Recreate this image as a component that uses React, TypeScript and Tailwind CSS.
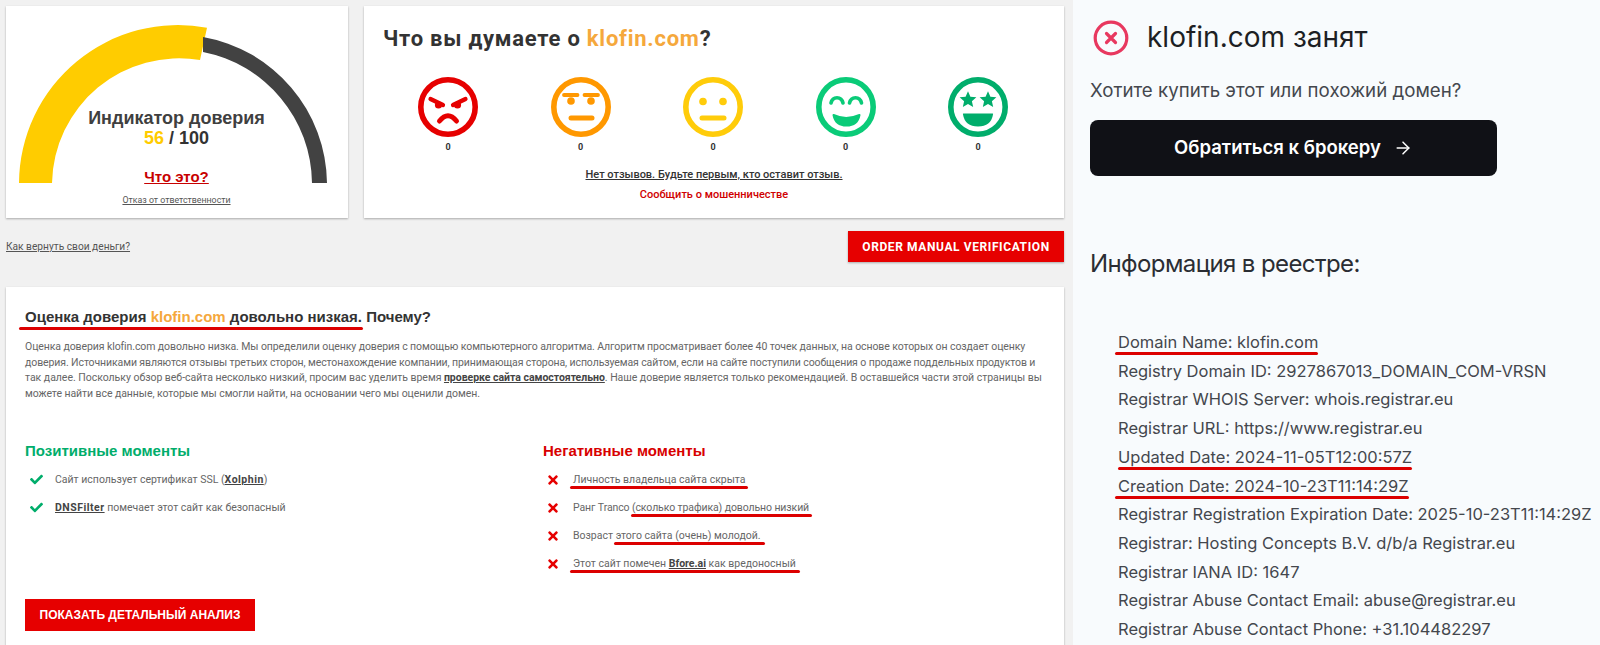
import React from 'react';
import { ArrowRight } from 'lucide-react';
import { FaCheck, FaTimes } from 'react-icons/fa';

const Redline = ({ className }: { className: string }) => (
  <span className={`absolute h-[3px] rounded-full bg-[#dc0000] ${className}`}></span>
);

const Gauge = () => (
  <svg viewBox="0 0 342 212" className="absolute left-0 top-0 h-[212px] w-[342px]">
    <path d="M13 177 A159 159 0 0 1 201 21.7 L194 54 A127 127 0 0 0 46 177 Z" fill="#ffcc00" />
    <path d="M197 31 A150 150 0 0 1 321 177 L306 177 A135 135 0 0 0 197 46 Z" fill="#424242" />
  </svg>
);

const Face = ({ color, children }: { color: string; children: React.ReactNode }) => (
  <svg viewBox="0 0 60 60" className="h-[60px] w-[60px]" fill="none" stroke={color} strokeLinecap="round" strokeLinejoin="round">
    <circle cx="30" cy="30" r="27.2" strokeWidth="5.6" />
    {children}
  </svg>
);

const star = (cx: number, cy: number) => {
  const pts: string[] = [];
  for (let i = 0; i < 10; i++) {
    const r = i % 2 === 0 ? 8.8 : 4.1;
    const a = (Math.PI / 5) * i - Math.PI / 2;
    pts.push(`${(cx + r * Math.cos(a)).toFixed(2)},${(cy + r * Math.sin(a)).toFixed(2)}`);
  }
  return pts.join(' ');
};

const faces = [
  {
    color: '#e60000',
    body: (
      <>
        <path d="M12.5 22 L25 28 M47.5 22 L35 28" strokeWidth="4.2" />
        <circle cx="20.5" cy="28" r="3.6" fill="#e60000" stroke="none" />
        <circle cx="39.5" cy="28" r="3.6" fill="#e60000" stroke="none" />
        <path d="M21.5 44 Q30 33.5 38.5 44" strokeWidth="5" />
      </>
    ),
  },
  {
    color: '#ff9800',
    body: (
      <>
        <path d="M13 18 H26.5 M33.5 18 H47" strokeWidth="3.8" />
        <circle cx="20" cy="24" r="3.8" fill="#ff9800" stroke="none" />
        <circle cx="40" cy="24" r="3.8" fill="#ff9800" stroke="none" />
        <path d="M20 41 H41" strokeWidth="5" />
      </>
    ),
  },
  {
    color: '#ffcc0a',
    body: (
      <>
        <circle cx="20" cy="24.5" r="3.8" fill="#ffcc0a" stroke="none" />
        <circle cx="40" cy="24.5" r="3.8" fill="#ffcc0a" stroke="none" />
        <path d="M19 41 H41" strokeWidth="5" />
      </>
    ),
  },
  {
    color: '#0acb78',
    body: (
      <>
        <path d="M15 26 A6.2 7 0 0 1 27 26 M33.5 26 A6.2 7 0 0 1 45.5 26" strokeWidth="3.6" />
        <path d="M17.5 38 Q30 44 43.5 38 Q41.5 48.5 30.5 48.5 Q19.5 48.5 17.5 38 Z" fill="#0acb78" strokeWidth="2" />
      </>
    ),
  },
  {
    color: '#00ad6b',
    body: (
      <>
        <polygon points={star(20, 23)} fill="#00ad6b" stroke="none" />
        <polygon points={star(40, 23)} fill="#00ad6b" stroke="none" />
        <path d="M16 36.5 Q14.5 36 15 37.5 Q17 49.5 30 49.5 Q43 49.5 45 37.5 Q45.5 36 44 36.5 Z" fill="#00ad6b" stroke="none" />
      </>
    ),
  },
];

const whois = [
  { text: 'Domain Name: klofin.com', line: '-left-[3px] -right-[0px]' },
  { text: 'Registry Domain ID: 2927867013_DOMAIN_COM-VRSN' },
  { text: 'Registrar WHOIS Server: whois.registrar.eu' },
  { text: 'Registrar URL: https://www.registrar.eu' },
  { text: 'Updated Date: 2024-11-05T12:00:57Z', line: 'left-0 right-0' },
  { text: 'Creation Date: 2024-10-23T11:14:29Z', line: '-left-[3px] right-0' },
  { text: 'Registrar Registration Expiration Date: 2025-10-23T11:14:29Z' },
  { text: 'Registrar: Hosting Concepts B.V. d/b/a Registrar.eu' },
  { text: 'Registrar IANA ID: 1647' },
  { text: 'Registrar Abuse Contact Email: abuse@registrar.eu' },
  { text: 'Registrar Abuse Contact Phone: +31.104482297' },
];

const Item = ({ bad, children }: { bad?: boolean; children: React.ReactNode }) => (
  <li className="flex h-[28px] items-center">
    <span className={`flex w-[22px] shrink-0 justify-center ${bad ? 'text-[#e60000] pr-[2px]' : 'text-[#00ad6b]'}`}>
      {bad ? <FaTimes size={14} /> : <FaCheck size={13} />}
    </span>
    <span className="ml-[8px] whitespace-nowrap">{children}</span>
  </li>
);

const Bold = ({ children }: { children: React.ReactNode }) => (
  <b className="font-bold text-[#444] underline">{children}</b>
);

const ListBold = ({ children }: { children: React.ReactNode }) => (
  <b className="font-bold tracking-[0.5px] text-[#444] underline">{children}</b>
);

export default function App() {
  return (
    <div className="flex h-[645px] w-[1600px] overflow-hidden bg-[#f1f1f1]">
      {/* Left: scam check page */}
      <div className="w-[1073px] shrink-0 pl-[6px] pr-[9px] pt-[6px] font-['Roboto',sans-serif] text-[#555]">
        <div className="flex gap-[16px]">
          <div className="relative h-[212px] w-[342px] bg-white shadow-[0_1px_2px_rgba(0,0,0,0.3)]">
            <Gauge />
            <div className="relative flex flex-col items-center pt-[102px] pr-[1px] font-['Liberation_Sans',sans-serif]">
              <div className="text-[18px] leading-[20px] font-bold text-[#3f3f3f]">Индикатор доверия</div>
              <div className="text-[18px] leading-[20px] font-bold text-[#333]">
                <span className="text-[#ffcc00]">56</span> / 100
              </div>
              <a className="mt-[20px] text-[15px] leading-[18px] font-bold text-[#c80000] underline">Что это?</a>
              <a className="mt-[8px] font-['Roboto',sans-serif] text-[8.8px] leading-[12px] text-[#555] underline">Отказ от ответственности</a>
            </div>
          </div>
          <div className="h-[212px] flex-1 bg-white pt-[19px] shadow-[0_1px_2px_rgba(0,0,0,0.3)]">
            <h2 className="pl-[19px] text-[22px] leading-[28px] font-bold tracking-[0.75px] text-[#333]">
              Что вы думаете о <span className="text-[#f5a83c]">klofin.com</span>?
            </h2>
            <div className="mt-[24px] flex justify-between pl-[54px] pr-[56px]">
              {faces.map((f, i) => (
                <div key={i} className="flex flex-col items-center">
                  <Face color={f.color}>{f.body}</Face>
                  <span className="mt-[3px] text-[9px] leading-[14px] font-bold text-[#333]">0</span>
                </div>
              ))}
            </div>
            <div className="mt-[13px] text-center text-[11px] leading-[16px] font-medium text-[#333] underline">
              Нет отзывов. Будьте первым, кто оставит отзыв.
            </div>
            <div className="mt-[4px] text-center text-[11px] leading-[16px] font-medium text-[#d00000]">Сообщить о мошенничестве</div>
          </div>
        </div>

        <div className="mt-[13px] flex h-[31px] items-center justify-between">
          <a className="text-[10.2px] leading-[12px] text-[#555] underline">Как вернуть свои деньги?</a>
          <button className="h-[31px] w-[216px] bg-[#e60000] text-center text-[12px] font-bold tracking-[0.6px] text-white shadow-[0_1px_2px_rgba(0,0,0,0.3)]">
            ORDER MANUAL VERIFICATION
          </button>
        </div>

        <div className="mt-[25px] h-[400px] bg-white pl-[19px] pt-[19px] shadow-[0_1px_2px_rgba(0,0,0,0.3)]">
          <h3 className="font-['Liberation_Sans',sans-serif] text-[15px] leading-[22px] font-bold text-[#333]">
            <span className="relative">
              Оценка доверия <span className="text-[#f5a83c]">klofin.com</span> довольно низкая.
              <Redline className="-bottom-[5px] -left-[6px] -right-[1px]" />
            </span>{' '}
            Почему?
          </h3>
          <p className="mt-[11px] whitespace-nowrap text-[10.5px] leading-[15.7px] text-[#666]">
            <span className="block tracking-[-0.09px]">
              Оценка доверия klofin.com довольно низка. Мы определили оценку доверия с помощью компьютерного алгоритма. Алгоритм просматривает более 40 точек данных, на основе которых он создает оценку
            </span>
            <span className="block tracking-[-0.1px]">
              доверия. Источниками являются отзывы третьих сторон, местонахождение компании, принимающая сторона, используемая сайтом, если на сайте поступили сообщения о продаже поддельных продуктов и
            </span>
            <span className="block tracking-[-0.03px]">
              так далее. Поскольку обзор веб-сайта несколько низкий, просим вас уделить время <Bold>проверке сайта самостоятельно</Bold>. Наше доверие является только рекомендацией. В оставшейся части этой страницы вы
            </span>
            <span className="block tracking-[-0.07px]">можете найти все данные, которые мы смогли найти, на основании чего мы оценили домен.</span>
          </p>
          <div className="mt-[39px] flex">
            <div className="w-[518px]">
              <h4 className="font-['Liberation_Sans',sans-serif] text-[15px] leading-[20px] font-bold text-[#00ad6b]">Позитивные моменты</h4>
              <ul className="mt-[5px] text-[10.5px] text-[#666]">
                <Item>
                  Сайт использует сертификат SSL (<ListBold>Xolphin</ListBold>)
                </Item>
                <Item>
                  <ListBold>DNSFilter</ListBold> помечает этот сайт как безопасный
                </Item>
              </ul>
            </div>
            <div>
              <h4 className="font-['Liberation_Sans',sans-serif] text-[15px] leading-[20px] font-bold text-[#d80000]">Негативные моменты</h4>
              <ul className="mt-[5px] text-[10.5px] text-[#666]">
                <Item bad>
                  <span className="relative">
                    Личность владельца сайта скрыта
                    <Redline className="-bottom-[3px] -left-[3px] -right-[2px]" />
                  </span>
                </Item>
                <Item bad>
                  <span className="tracking-[-0.1px]">Ранг Tranco </span>
                  <span className="relative tracking-[-0.1px]">
                    (сколько трафика) довольно низкий
                    <Redline className="-bottom-[3px] -left-[1px] -right-[3px]" />
                  </span>
                </Item>
                <Item bad>
                  Возраст{' '}
                  <span className="relative">
                    этого сайта (очень) молодой.
                    <Redline className="-bottom-[3px] -left-[2px] -right-[4px]" />
                  </span>
                </Item>
                <Item bad>
                  <span className="relative">
                    Этот сайт помечен <Bold>Bfore.ai</Bold> как вредоносный
                    <Redline className="-bottom-[3px] -left-[3px] -right-[4px]" />
                  </span>
                </Item>
              </ul>
            </div>
          </div>
          <button className="mt-[21px] h-[32px] w-[230px] bg-[#e60000] font-['Liberation_Sans',sans-serif] text-[12px] font-bold text-white">
            ПОКАЗАТЬ ДЕТАЛЬНЫЙ АНАЛИЗ
          </button>
        </div>
      </div>

      {/* Right: registrar lookup */}
      <div className="flex-1 bg-[#f8fbfd] pl-[17px] pt-[20px] font-['Inter',sans-serif]">
        <div className="flex h-[36px] items-center pl-[3px]">
          <svg viewBox="0 0 36 36" className="h-[36px] w-[36px]" fill="none" stroke="#e8385f" strokeLinecap="round">
            <circle cx="18" cy="18" r="15.8" strokeWidth="3.2" />
            <path d="M13.5 13.5 L22.5 22.5 M22.5 13.5 L13.5 22.5" strokeWidth="3.2" />
          </svg>
          <span className="ml-[18px] -translate-y-px text-[28px] leading-[36px] text-[#1d1f24]">klofin.com занят</span>
        </div>
        <p className="mt-[22px] text-[18.7px] leading-[26px] text-[#44474d]">Хотите купить этот или похожий домен?</p>
        <button className="mt-[16px] flex h-[56px] w-[407px] items-center justify-center gap-[12px] rounded-[8px] bg-[#101116] text-[18.5px] font-semibold text-white">
          Обратиться к брокеру
          <ArrowRight size={20} strokeWidth={1.8} />
        </button>
        <h3 className="mt-[71px] text-[24px] leading-[34px] tracking-[-0.6px] text-[#2a2d33]">Информация в реестре:</h3>
        <ul className="mt-[47px] pl-[28px] text-[16.5px] leading-[28.7px] text-[#44474d]">
          {whois.map((row) => (
            <li key={row.text} className="whitespace-nowrap">
              <span className="relative">
                {row.text}
                {row.line && <Redline className={`-bottom-[3px] ${row.line}`} />}
              </span>
            </li>
          ))}
        </ul>
      </div>
    </div>
  );
}
